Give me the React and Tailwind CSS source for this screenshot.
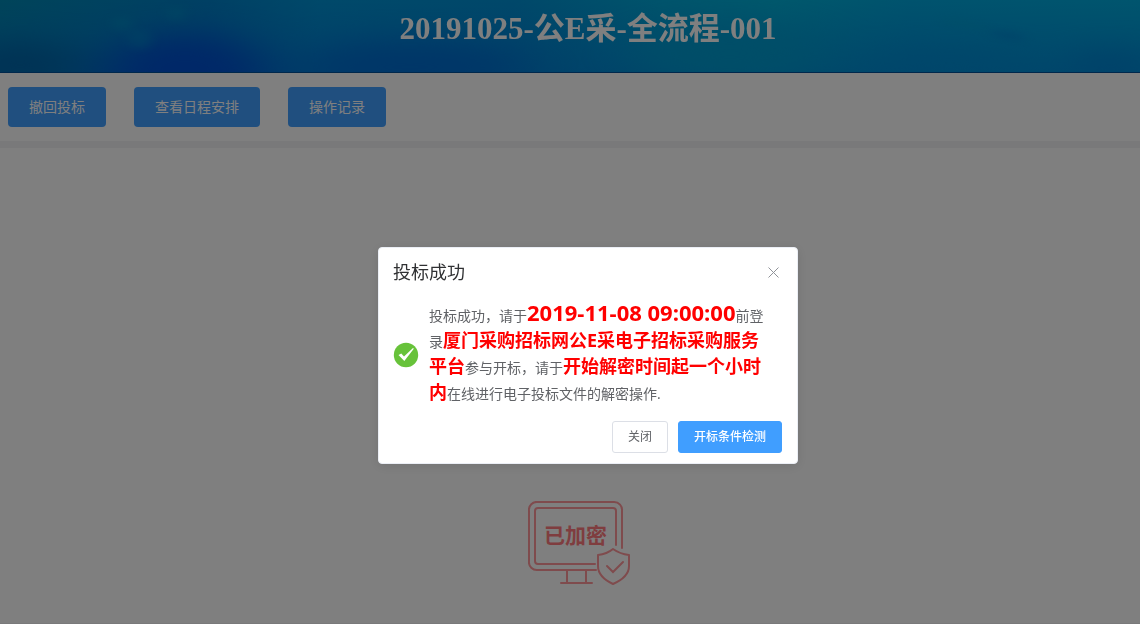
import React, { useState } from 'react';

const actions = ['撤回投标', '查看日程安排', '操作记录'];

const BannerBackground = () => (
    <svg
        className="absolute inset-0 w-full h-full"
        viewBox="0 0 1140 73"
        preserveAspectRatio="none"
        aria-hidden="true"
    >
        <defs>
            <linearGradient id="sea" x1="0" y1="0" x2="1" y2="0">
                <stop offset="0" stopColor="#0088b4" />
                <stop offset="0.1" stopColor="#0084c0" />
                <stop offset="0.18" stopColor="#0080c8" />
                <stop offset="0.28" stopColor="#0092d4" />
                <stop offset="0.45" stopColor="#0090d4" />
                <stop offset="0.58" stopColor="#00a8d8" />
                <stop offset="0.68" stopColor="#00b0d8" />
                <stop offset="0.8" stopColor="#00a6dc" />
                <stop offset="1" stopColor="#00aadc" />
            </linearGradient>
            <linearGradient id="depth" x1="0" y1="0" x2="0" y2="1">
                <stop offset="0" stopColor="#0060d0" stopOpacity="0" />
                <stop offset="1" stopColor="#0068d0" stopOpacity="0.4" />
            </linearGradient>
            <filter id="soft" x="-50%" y="-50%" width="200%" height="200%" colorInterpolationFilters="sRGB">
                <feGaussianBlur stdDeviation="28 14" />
            </filter>
            <filter id="wisp" x="-50%" y="-100%" width="200%" height="300%" colorInterpolationFilters="sRGB">
                <feGaussianBlur stdDeviation="6 4" />
            </filter>
        </defs>
        <rect width="1140" height="73" fill="url(#sea)" />
        <rect width="1140" height="73" fill="url(#depth)" />
        <g filter="url(#soft)">
            <ellipse cx="185" cy="74" rx="80" ry="40" fill="#0050d0" />
            <ellipse cx="20" cy="66" rx="60" ry="24" fill="#0064a8" />
            <ellipse cx="410" cy="68" rx="110" ry="26" fill="#006cd0" />
            <ellipse cx="730" cy="54" rx="90" ry="26" fill="#009cd0" />
            <ellipse cx="950" cy="64" rx="70" ry="12" fill="#008cd4" />
            <ellipse cx="1110" cy="66" rx="34" ry="14" fill="#007cd0" />
        </g>
        <g filter="url(#wisp)" fill="#00a0c8" opacity="0.3">
            <ellipse cx="122" cy="24" rx="10" ry="7" />
            <ellipse cx="176" cy="14" rx="9" ry="8" />
            <ellipse cx="140" cy="40" rx="12" ry="10" />
            <ellipse cx="965" cy="24" rx="26" ry="3" transform="rotate(12 965 24)" />
        </g>
        <ellipse cx="1008" cy="36" rx="18" ry="3" fill="#007cd0" opacity="0.6" filter="url(#wisp)" transform="rotate(8 1008 36)" />
    </svg>
);

const EncryptedIcon = () => (
    <div className="relative w-[102px] h-[84px] text-[#ff969a]">
        <svg className="w-full h-full" viewBox="0 0 102 84" fill="none" stroke="currentColor" strokeWidth="2" strokeLinecap="round" aria-hidden="true">
            <path d="M94 47V10a8 8 0 0 0-8-9H10a8 8 0 0 0-9 9v50a8 8 0 0 0 9 9h58" />
            <path d="M88 44V10a3 3 0 0 0-3-3H10a3 3 0 0 0-3 3v50a3 3 0 0 0 3 3h57" />
            <path d="M39 70v11M58 70v11M33 82h31" />
            <path d="M85 48q7 5 16 6v11q0 11-16 18q-15-7-15-18V54q9-1 15-6Z" strokeLinejoin="round" />
            <path d="m79 65 6 6 10-10" />
        </svg>
        <span className="absolute left-4 top-5 text-[21px] leading-7 font-bold text-[#ff7a7e] whitespace-nowrap">已加密</span>
    </div>
);

const SuccessDialog = ({ onClose }) => (
    <div className="fixed inset-0 bg-black/50 flex items-start justify-center pt-[247px] pl-9">
        <div
            role="dialog"
            aria-modal="true"
            aria-labelledby="dialog-title"
            className="w-[420px] bg-white rounded border border-[#ebeef5] shadow-[0_2px_12px_0_rgba(0,0,0,0.1)] pb-[10px]"
        >
            {/* Header */}
            <div className="flex items-center justify-between px-[14px] pt-[14px] pb-[10px]">
                <h2 id="dialog-title" className="text-[18px] leading-[20px] text-[#303133]">投标成功</h2>
                <button type="button" aria-label="关闭对话框" onClick={onClose} className="p-1 text-[#909399]">
                    <svg className="w-[11px] h-[11px]" viewBox="0 0 11 11" stroke="currentColor" aria-hidden="true">
                        <path d="M.5.5l10 10M10.5.5l-10 10" />
                    </svg>
                </button>
            </div>

            {/* Message */}
            <div className="flex items-center gap-[10px] px-[14px] pt-[10px] pb-[9px] text-[14px] leading-[26px] text-[#606266]">
                <svg className="w-[26px] h-[26px] shrink-0" viewBox="0 0 26 26" aria-hidden="true">
                    <circle cx="13" cy="13" r="12.2" fill="#67c23a" />
                    <path d="M5.5 13l2.8-1.4 2.7 3L20 6l.8.8L11.3 19Z" fill="#fff" />
                </svg>
                <p className="w-[338px]">
                    投标成功，请于<strong className="text-[22px] leading-[20px] text-[#f00]">2019-11-08 09:00:00</strong>前登录
                    <strong className="text-[18px] leading-[20px] text-[#f00]">厦门采购招标网公E采电子招标采购服务平台</strong>
                    参与开标，请于<strong className="text-[18px] leading-[20px] text-[#f00]">开始解密时间起一个小时内</strong>在线进行电子投标文件的解密操作.
                </p>
            </div>

            {/* Footer */}
            <div className="flex justify-end gap-[10px] px-[15px] pt-[5px] text-[12px] leading-[14px]">
                <button type="button" onClick={onClose} className="h-8 px-[15px] rounded-[3px] border border-[#dcdfe6] text-[#606266] hover:text-[#409eff]">
                    关闭
                </button>
                <button type="button" className="h-8 px-[15px] rounded-[3px] border border-[#409eff] bg-[#409eff] text-white font-medium hover:bg-[#66b1ff]">
                    开标条件检测
                </button>
            </div>
        </div>
    </div>
);

const App = () => {
    const [open, setOpen] = useState(true);

    return (
        <div className="min-h-screen bg-white flex flex-col overflow-hidden border-b border-[#f2f2f4] font-['Open_Sans','Noto_Sans_CJK_SC',sans-serif]">
            <header className="relative h-[73px] pl-9 border-b border-[#005098]">
                <BannerBackground />
                <h1 className="relative text-center text-[31px] leading-[58px] font-bold text-white font-['Liberation_Serif','Noto_Sans_CJK_SC',serif]">
                    20191025-公E采-全流程-001
                </h1>
            </header>

            <div className="flex gap-7 px-2 py-[14px] border-b-[7px] border-[#f2f2f4]">
                {actions.map((label) => (
                    <button
                        key={label}
                        type="button"
                        className="h-10 px-[21px] pb-[2px] rounded bg-[#409eff] text-[14px] text-white hover:bg-[#66b1ff]"
                    >
                        {label}
                    </button>
                ))}
            </div>

            <main className="flex-1 flex justify-center items-end pb-[38px] pl-[18px]">
                <EncryptedIcon />
            </main>

            {open && <SuccessDialog onClose={() => setOpen(false)} />}
        </div>
    );
};

export default App;
